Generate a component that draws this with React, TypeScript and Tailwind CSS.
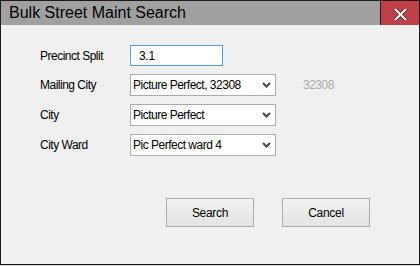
import { ReactNode } from "react";

const font = { fontFamily: '"Liberation Sans", Arial, sans-serif' };

function Chevron() {
  return (
    <svg width="9" height="6" viewBox="0 0 9 6" aria-hidden="true">
      <path d="M1 1 L4.5 4.5 L8 1" fill="none" stroke="#444" strokeWidth="2" />
    </svg>
  );
}

function Select({ value }: { value: string }) {
  return (
    <div className="flex h-[22px] w-[146px] items-center justify-between border border-[#acacac] bg-white pl-[2px] pr-[4px]">
      <span className="text-[12px] tracking-[-0.5px] text-black">{value}</span>
      <Chevron />
    </div>
  );
}

function Row({ label, children, className = "" }: { label: string; children: ReactNode; className?: string }) {
  return (
    <div className={`flex items-center ${className}`}>
      <span className="w-[90px] text-[12px] tracking-[-0.5px] text-black">{label}</span>
      {children}
    </div>
  );
}

function DialogButton({ label }: { label: string }) {
  return (
    <button className="h-[29px] w-[88px] border border-[#adadad] bg-gradient-to-b from-[#f2f2f2] to-[#e4e4e4] text-[12px] tracking-[-0.3px] text-black">
      {label}
    </button>
  );
}

export default function App() {
  return (
    <div className="h-[266px] w-[420px] bg-[#cfcfcf]" style={font}>
      <div className="flex h-[265px] w-[420px] flex-col border border-[#1b1b1b] bg-[#f0f0f0]">
        <header className="flex h-[24px] items-stretch bg-[#a0a0a0]">
          <h1 className="flex-1 pl-[8px] text-[16px] leading-[24px] text-black">Bulk Street Maint Search</h1>
          <div className="flex w-[39px] items-center justify-center border-l border-[#1b1b1b] bg-[#c0404a] pt-[2px]">
            <svg width="15" height="15" viewBox="0 0 15 15" aria-hidden="true">
              <path d="M2 2 L13 13 M13 2 L2 13" stroke="#5a1a1f" strokeWidth="3.4" />
              <path d="M2 2 L13 13 M13 2 L2 13" stroke="#ffffff" strokeWidth="2" />
            </svg>
          </div>
        </header>

        <div className="flex flex-col pl-[39px] pt-[20px]">
          <Row label="Precinct Split">
            <div className="flex h-[21px] w-[93px] items-center border border-[#569de5] bg-white pl-[8px]">
              <span className="text-[12px] tracking-[-0.3px] text-black">3.1</span>
            </div>
          </Row>
          <Row label="Mailing City" className="mt-[8px]">
            <Select value="Picture Perfect, 32308" />
            <span className="ml-[27px] text-[12px] tracking-[-0.5px] text-[#aaaaaa]">32308</span>
          </Row>
          <Row label="City" className="mt-[8px]">
            <Select value="Picture Perfect" />
          </Row>
          <Row label="City Ward" className="mt-[8px]">
            <Select value="Pic Perfect ward 4" />
          </Row>

          <div className="mt-[42px] flex gap-[28px] pl-[126px]">
            <DialogButton label="Search" />
            <DialogButton label="Cancel" />
          </div>
        </div>
      </div>
    </div>
  );
}
